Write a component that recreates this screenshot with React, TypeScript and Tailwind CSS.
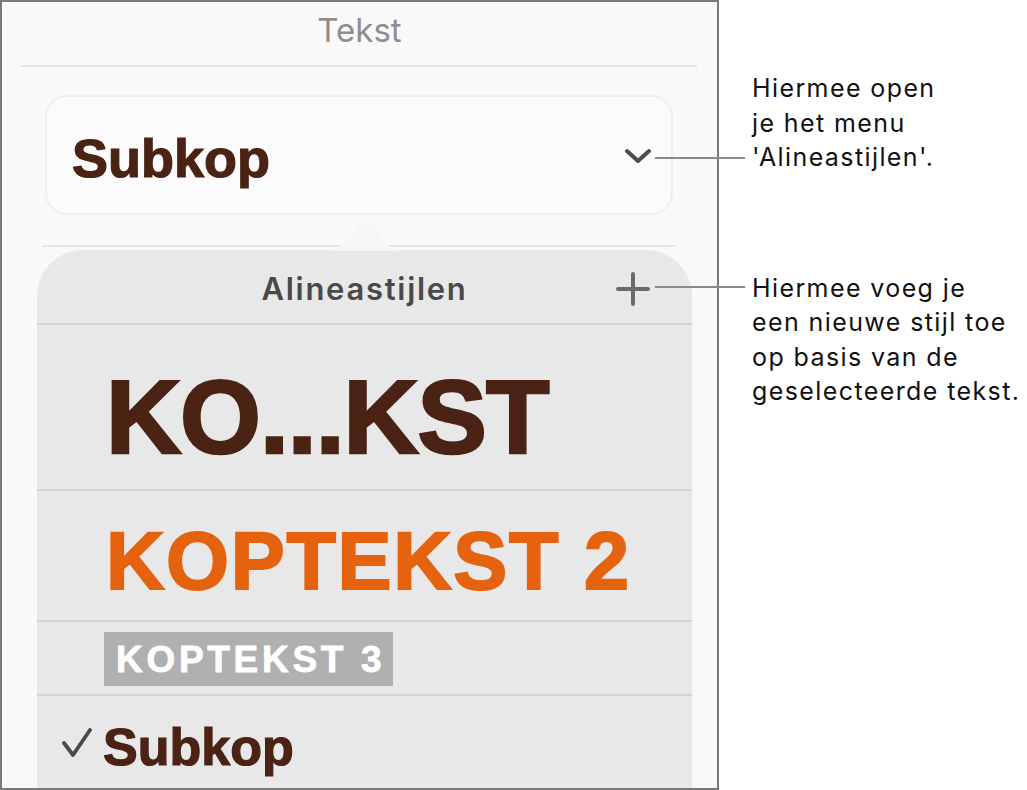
import React from 'react';

// Text panel with the paragraph-style popover and two callouts on the right

const UI_FONT = "font-['Inter','Roboto',sans-serif]";
const HEAD_FONT = "font-['Liberation_Sans','Arial',sans-serif]";

function Chevron() {
  return (
    <svg width="30" height="18" viewBox="0 0 30 18" className="mb-[4px]">
      <path d="M4 4 L15 14 L26 4" fill="none" stroke="#4d4d4d" strokeWidth="4" strokeLinecap="round" strokeLinejoin="round" />
    </svg>
  );
}

function Plus() {
  return (
    <svg width="34" height="34" viewBox="0 0 34 34">
      <path d="M17 2 V32 M2 17 H32" fill="none" stroke="#6b6b6b" strokeWidth="4" strokeLinecap="round" />
    </svg>
  );
}

function Check() {
  return (
    <svg width="30" height="30" viewBox="0 0 30 30" className="mt-[7px] shrink-0">
      <path d="M2 15 L11 27 L28 2" fill="none" stroke="#4a4a4a" strokeWidth="3.8" strokeLinecap="round" strokeLinejoin="round" />
    </svg>
  );
}

export default function App() {
  return (
    <div className="relative flex w-[1027px] h-[790px] bg-white overflow-hidden">
      {/* Sidebar panel */}
      <div className="w-[719px] h-[790px] shrink-0 border-2 border-[#7a7a7a] bg-[#f9f9f9] flex flex-col overflow-hidden">
        <div className={`h-[63px] flex justify-center pt-[12px] ${UI_FONT} text-[33px] leading-[33px] text-[#8e8e8e]`}>
          Tekst
        </div>
        <div className="h-[2px] bg-[#e6e6e6] ml-[19px] mr-[20px]" />

        {/* Style selector */}
        <div className="mt-[28px] ml-[43px] mr-[44px] h-[120px] rounded-[22px] border-2 border-[#efefef] bg-[#fbfbfb] flex items-center justify-between pl-[25px] pr-[18px] pt-[5px]">
          <span className={`${HEAD_FONT} font-bold text-[54px] leading-none text-[#4a2314] [-webkit-text-stroke:1.2px_#4a2314]`}>Subkop</span>
          <Chevron />
        </div>

        <div className="mt-[30px] h-[2px] bg-[#e6e6e6] ml-[40px] mr-[41px]" />

        {/* Paragraph styles popover */}
        <div className="relative mt-[3px] ml-[35px] mr-[25px] flex-1 rounded-t-[46px] bg-[#e8e8e8] flex flex-col">
          <svg width="72" height="28" viewBox="0 0 72 28" className="absolute -top-[27px] left-1/2 -translate-x-1/2">
            <path d="M0 28 C 16 28, 26 0, 36 0 C 46 0, 56 28, 72 28 Z" fill="#f6f6f4" />
          </svg>

          <div className="h-[75px] shrink-0 border-b-2 border-[#d4d4d4] grid grid-cols-[1fr_auto_1fr] items-center pt-[4px]">
            <div />
            <span className={`${UI_FONT} font-semibold text-[31px] leading-none tracking-[0.055em] text-[#4a4a4a]`}>
              Alineastijlen
            </span>
            <div className="justify-self-end pr-[42px]">
              <Plus />
            </div>
          </div>

          <div className="h-[166px] shrink-0 border-b-2 border-[#d4d4d4] pl-[69px] pt-[40px]">
            <span className={`${HEAD_FONT} font-bold text-[104px] leading-none tracking-[-0.01em] text-[#4a2314] [-webkit-text-stroke:2.6px_#4a2314]`}>KO...KST</span>
          </div>

          <div className="h-[131px] shrink-0 border-b-2 border-[#d4d4d4] pl-[69px] pt-[30px]">
            <span className={`${HEAD_FONT} font-bold text-[81px] leading-none tracking-[0.02em] text-[#e5620f] [-webkit-text-stroke:2px_#e5620f]`}>KOPTEKST 2</span>
          </div>

          <div className="h-[74px] shrink-0 border-b-2 border-[#d4d4d4] pl-[67px] pt-[10px]">
            <div className="inline-flex h-[54px] items-center bg-[#b0b0b0] pl-[12px] pr-[8px]">
              <span className={`${HEAD_FONT} font-bold text-[37px] leading-none tracking-[0.1em] text-white [-webkit-text-stroke:0.8px_#ffffff]`}>KOPTEKST 3</span>
            </div>
          </div>

          <div className="flex-1 flex items-start pl-[25px] pt-[25px]">
            <Check />
            <span className={`ml-[11px] ${HEAD_FONT} font-bold text-[52px] leading-none text-[#4a2314] [-webkit-text-stroke:1.2px_#4a2314]`}>Subkop</span>
          </div>
        </div>
      </div>

      {/* Callout texts */}
      <div className={`pl-[33px] ${UI_FONT} text-[25px] leading-[34.5px] tracking-[1.4px] text-[#111111]`}>
        <div className="mt-[71px]">
          <div>Hiermee open</div>
          <div>je het menu</div>
          <div>'Alineastijlen'.</div>
        </div>
        <div className="mt-[96px]">
          <div>Hiermee voeg je</div>
          <div>een nieuwe stijl toe</div>
          <div>op basis van de</div>
          <div>geselecteerde tekst.</div>
        </div>
      </div>

      {/* Leader lines */}
      <div className="absolute left-[655px] top-[157px] w-[90px] h-[2px] bg-[#8a8a8a]" />
      <div className="absolute left-[655px] top-[286px] w-[90px] h-[2px] bg-[#8a8a8a]" />
    </div>
  );
}
